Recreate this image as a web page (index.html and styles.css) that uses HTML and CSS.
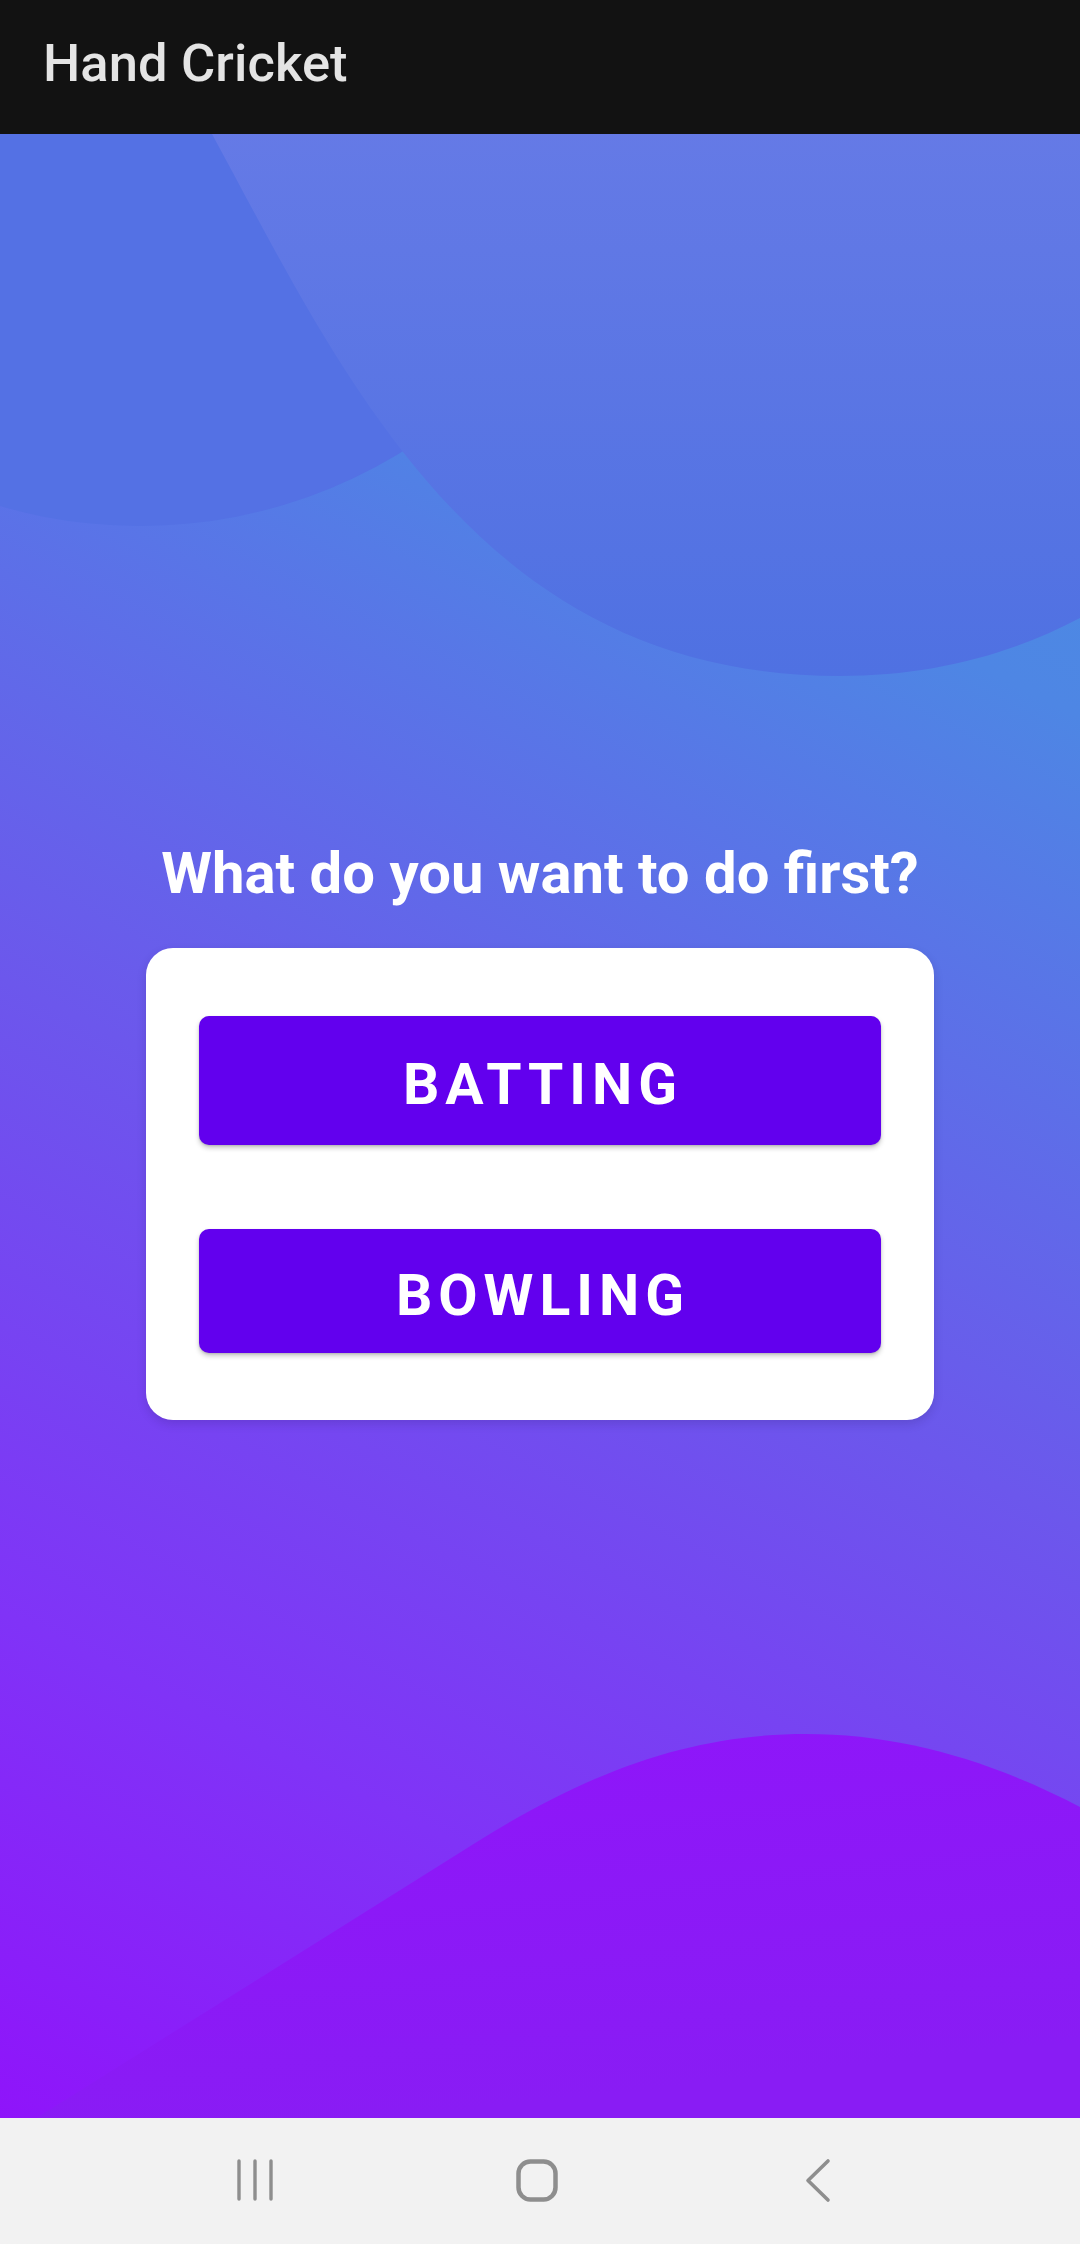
FILE: index.html
```html
<!DOCTYPE html>
<html lang="en">
<head>
<meta charset="utf-8">
<title>Hand Cricket</title>
<link rel="stylesheet" href="styles.css">
</head>
<body>
<div class="screen">
  <header class="appbar">
    <h1 class="appbar-title">Hand Cricket</h1>
  </header>
  <main class="content">
    <svg class="backdrop" viewBox="0 0 1080 1984" preserveAspectRatio="none" aria-hidden="true">
      <defs>
        <linearGradient id="bigGrad" x1="0" y1="0" x2="0" y2="1">
          <stop offset="0" stop-color="#657ae6"/>
          <stop offset="1" stop-color="#4f71e2"/>
        </linearGradient>
        <linearGradient id="blobGrad" x1="0" y1="0" x2="0.3" y2="1">
          <stop offset="0" stop-color="#8f15fa"/>
          <stop offset="1" stop-color="#891cf4"/>
        </linearGradient>
      </defs>
      <circle cx="140" cy="-108" r="500" fill="#5471e4"/>
      <path d="M207 -10 L212 0 C345 245 480 542 840 542 C930 542 1010 521 1080 484 L1080 -10 Z" fill="url(#bigGrad)"/>
      <path d="M38 1983 L480 1706 C600 1631 700 1600 806 1600 C900 1600 990 1626 1080 1673 L1080 1990 L38 1990 Z" fill="url(#blobGrad)"/>
    </svg>
    <div class="panel">
      <h2 class="question">What do you want to do first?</h2>
      <div class="card">
        <button class="choice choice-bat" type="button">BATTING</button>
        <button class="choice choice-bowl" type="button">BOWLING</button>
      </div>
    </div>
  </main>
  <nav class="navbar">
    <svg class="nav-icon" width="60" height="60" viewBox="0 0 60 60" aria-label="Recent apps">
      <line x1="13" y1="10" x2="13" y2="48" stroke="#8e8e8e" stroke-width="3.4" stroke-linecap="round"/>
      <line x1="29" y1="10" x2="29" y2="48" stroke="#8e8e8e" stroke-width="3.4" stroke-linecap="round"/>
      <line x1="45" y1="10" x2="45" y2="48" stroke="#8e8e8e" stroke-width="3.4" stroke-linecap="round"/>
    </svg>
    <svg class="nav-icon" width="60" height="60" viewBox="0 0 60 60" aria-label="Home">
      <rect x="11.5" y="10.5" width="37" height="38" rx="12" ry="12" fill="none" stroke="#8e8e8e" stroke-width="4.5"/>
    </svg>
    <svg class="nav-icon" width="60" height="60" viewBox="0 0 60 60" aria-label="Back">
      <polyline points="41,10 21,29.5 41,49" fill="none" stroke="#8e8e8e" stroke-width="3.6" stroke-linecap="round" stroke-linejoin="round"/>
    </svg>
  </nav>
</div>
</body>
</html>
```

FILE: styles.css
```css
* {
  box-sizing: border-box;
}

html, body {
  margin: 0;
  padding: 0;
}

body {
  width: 1080px;
  height: 2244px;
  overflow: hidden;
  font-family: Roboto, "Noto Sans", "Liberation Sans", sans-serif;
  background: #f2f2f2;
}

.screen {
  display: flex;
  flex-direction: column;
  width: 1080px;
  height: 2244px;
}

.appbar {
  height: 134px;
  flex: 0 0 134px;
  background: #121212;
  display: flex;
  align-items: center;
  padding: 0 0 8px 43px;
}

.appbar-title {
  margin: 0;
  font-size: 52.5px;
  font-weight: 500;
  color: #e4e4e4;
  line-height: 1;
  letter-spacing: 0.1px;
}

.content {
  position: relative;
  flex: 0 0 1984px;
  height: 1984px;
  overflow: hidden;
  background: linear-gradient(27deg, #8f14fa 0%, #8033f7 20%, #6c57ec 45%, #4e86e4 77%, #4a90e2 100%);
  display: flex;
  flex-direction: column;
  align-items: center;
  justify-content: center;
  padding-top: 7px;
}

.backdrop {
  position: absolute;
  left: 0;
  top: 0;
  width: 1080px;
  height: 1984px;
}

.panel {
  position: relative;
  display: flex;
  flex-direction: column;
  align-items: center;
}

.question {
  margin: 0 0 41px;
  font-size: 58px;
  line-height: 68px;
  font-weight: 700;
  color: #ffffff;
  text-align: center;
}

.card {
  width: 788px;
  background: #ffffff;
  border-radius: 27px;
  padding: 68px 53px 67px;
  display: flex;
  flex-direction: column;
  gap: 84px;
  box-shadow: 0 4px 10px rgba(40, 20, 90, 0.18);
}

.choice {
  width: 682px;
  border: none;
  border-radius: 10px;
  background: #6200ee;
  color: #ffffff;
  font-family: Roboto, "Noto Sans", "Liberation Sans", sans-serif;
  font-weight: 700;
  font-size: 57px;
  letter-spacing: 6px;
  padding: 8px 0 0 6px;
  line-height: 1;
  display: flex;
  align-items: center;
  justify-content: center;
  box-shadow: 0 3px 5px rgba(0, 0, 0, 0.22), 0 1px 2px rgba(0, 0, 0, 0.12);
}

.choice-bat {
  height: 129px;
}

.choice-bowl {
  height: 124px;
}

.navbar {
  flex: 0 0 126px;
  height: 126px;
  background: #f2f2f2;
  display: flex;
  align-items: center;
  justify-content: space-between;
  padding: 0 233px 0 226px;
}

.nav-icon {
  display: block;
}
```
